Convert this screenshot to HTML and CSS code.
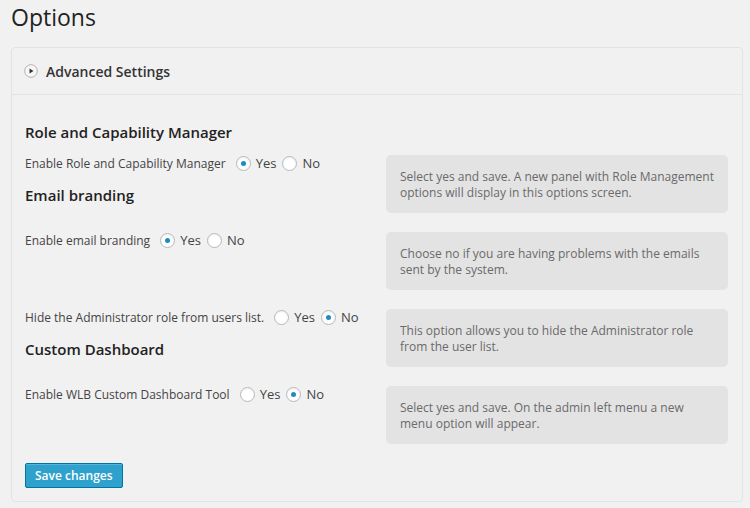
FILE: index.html
```html
<!DOCTYPE html>
<html lang="en">
<head>
    <meta charset="UTF-8">
    <title>Options</title>
    <link rel="stylesheet" href="styles.css">
</head>
<body>
    <h1 class="page-title">Options</h1>

    <div class="panel">
        <div class="panel-head">
            <span class="toggle-icon">
                <svg width="14" height="14" viewBox="0 0 14 14">
                    <circle cx="7" cy="7" r="6.3" fill="#f7f7f7" stroke="#b0b0b0" stroke-width="1"/>
                    <path d="M5.5 4.5 L9.5 7 L5.5 9.5 Z" fill="#333"/>
                </svg>
            </span>
            <h3>Advanced Settings</h3>
        </div>

        <form class="panel-body">
            <h4 class="group-title first">Role and Capability Manager</h4>

            <div class="opt-row">
                <div class="opt-left">
                    <div class="opt-line">
                        <span class="opt-label">Enable Role and Capability Manager</span>
                        <label><input type="radio" name="rcm" checked> Yes</label>
                        <label><input type="radio" name="rcm"> No</label>
                    </div>
                    <h4 class="group-title">Email branding</h4>
                </div>
                <div class="opt-desc">Select yes and save. A new panel with Role Management options will display in this options screen.</div>
            </div>

            <div class="opt-row">
                <div class="opt-left">
                    <div class="opt-line">
                        <span class="opt-label">Enable email branding</span>
                        <label><input type="radio" name="email" checked> Yes</label>
                        <label><input type="radio" name="email"> No</label>
                    </div>
                </div>
                <div class="opt-desc">Choose no if you are having problems with the emails sent by the system.</div>
            </div>

            <div class="opt-row">
                <div class="opt-left">
                    <div class="opt-line">
                        <span class="opt-label">Hide the Administrator role from users list.</span>
                        <label><input type="radio" name="hideadmin"> Yes</label>
                        <label><input type="radio" name="hideadmin" checked> No</label>
                    </div>
                    <h4 class="group-title">Custom Dashboard</h4>
                </div>
                <div class="opt-desc">This option allows you to hide the Administrator role from the user list.</div>
            </div>

            <div class="opt-row">
                <div class="opt-left">
                    <div class="opt-line">
                        <span class="opt-label">Enable WLB Custom Dashboard Tool</span>
                        <label><input type="radio" name="dash"> Yes</label>
                        <label><input type="radio" name="dash" checked> No</label>
                    </div>
                </div>
                <div class="opt-desc">Select yes and save. On the admin left menu a new menu option will appear.</div>
            </div>

            <button type="button" class="button-primary">Save changes</button>
        </form>
    </div>
</body>
</html>
```

FILE: styles.css
```css
body {
    margin: 0;
    padding: 0 7px 0 11px;
    background-color: #f1f1f1;
    color: #444;
    font-family: "Open Sans", "Liberation Sans", sans-serif;
    font-size: 12px;
}

.page-title {
    margin: 0;
    padding: 3px 0 0 0;
    height: 44px;
    font-size: 23px;
    font-weight: 400;
    line-height: 29px;
    color: #222;
}

.panel {
    border: 1px solid #e3e3e3;
    border-radius: 4px;
    background-color: #f1f1f1;
}

.panel-head {
    display: flex;
    align-items: center;
    height: 46px;
    padding-left: 12px;
    border-bottom: 1px solid #e3e3e3;
}

.toggle-icon {
    display: flex;
    width: 14px;
    height: 14px;
    margin-right: 8px;
}

.panel-head h3 {
    margin: 0;
    font-size: 14px;
    font-weight: 600;
    color: #333;
}

.panel-body {
    padding: 27px 14px 13px 13px;
}

.group-title {
    margin: 13px 0 0 0;
    font-size: 15px;
    font-weight: 600;
    line-height: 20px;
    color: #222;
}

.group-title.first {
    margin: 0 0 13px 0;
}

.opt-row {
    display: grid;
    grid-template-columns: 1fr 342px;
    column-gap: 10px;
    margin-bottom: 19px;
}

.opt-line {
    display: flex;
    align-items: center;
    height: 18px;
    margin-top: -1px;
    white-space: nowrap;
}

.opt-label {
    margin-right: 10px;
}

.opt-line label {
    display: flex;
    align-items: center;
    margin-right: 6px;
    font-size: 13px;
}

.opt-line input {
    appearance: none;
    -webkit-appearance: none;
    display: grid;
    place-content: center;
    width: 15px;
    height: 15px;
    margin: 0 5px 0 0;
    border: 1px solid #b4b9be;
    border-radius: 50%;
    background-color: #fff;
    box-shadow: inset 0 1px 2px rgba(0, 0, 0, 0.07);
}

.opt-line input:checked::before {
    content: "";
    width: 5px;
    height: 5px;
    border-radius: 50%;
    background-color: #1e8cbe;
}

.opt-desc {
    box-sizing: border-box;
    height: 58px;
    padding: 14px 14px 12px 14px;
    border-radius: 5px;
    background-color: #e3e3e3;
    color: #6a6a6a;
    font-size: 12px;
    line-height: 16px;
}

.button-primary {
    display: block;
    height: 25px;
    padding: 0 9px;
    border: 1px solid #0074a2;
    border-radius: 2px;
    background-color: #2ea2cc;
    box-shadow: inset 0 1px 0 rgba(120, 200, 230, 0.5);
    color: #fff;
    font-family: "Open Sans", "Liberation Sans", sans-serif;
    font-size: 12px;
    font-weight: 600;
    line-height: 23px;
}
```
